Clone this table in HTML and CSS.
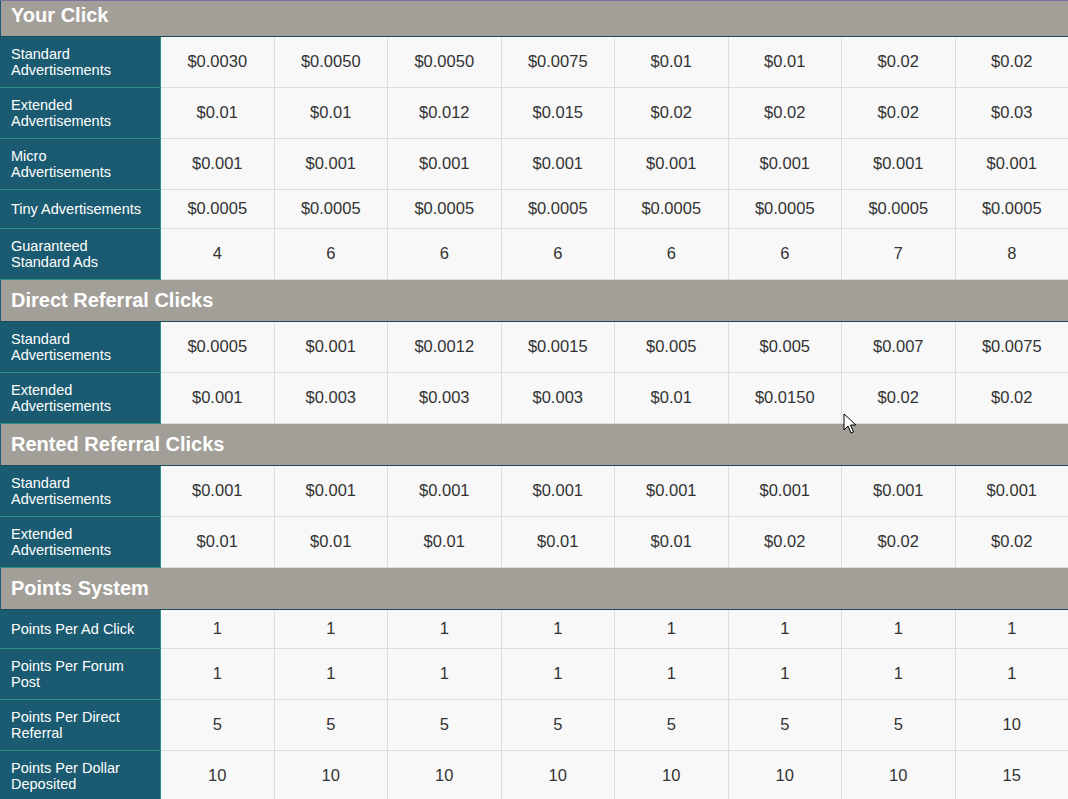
FILE: index.html
```html
<!DOCTYPE html>
<html lang="en">
<head>
  <meta charset="UTF-8">
  <meta name="viewport" content="width=device-width, initial-scale=1.0">
  <title>Membership Earnings</title>
  <link rel="stylesheet" href="styles.css">
</head>
<body>

<div id="earnings">
  <table class="rates">
    <colgroup>
      <col class="label-col">
      <col span="8">
    </colgroup>
    <tbody>
      <tr class="section first"><th colspan="9">Your Click</th></tr>
      <tr class="two">
        <td class="label">Standard Advertisements</td>
        <td>$0.0030</td><td>$0.0050</td><td>$0.0050</td><td>$0.0075</td><td>$0.01</td><td>$0.01</td><td>$0.02</td><td>$0.02</td>
      </tr>
      <tr class="two">
        <td class="label">Extended Advertisements</td>
        <td>$0.01</td><td>$0.01</td><td>$0.012</td><td>$0.015</td><td>$0.02</td><td>$0.02</td><td>$0.02</td><td>$0.03</td>
      </tr>
      <tr class="two">
        <td class="label">Micro<br>Advertisements</td>
        <td>$0.001</td><td>$0.001</td><td>$0.001</td><td>$0.001</td><td>$0.001</td><td>$0.001</td><td>$0.001</td><td>$0.001</td>
      </tr>
      <tr class="one">
        <td class="label">Tiny Advertisements</td>
        <td>$0.0005</td><td>$0.0005</td><td>$0.0005</td><td>$0.0005</td><td>$0.0005</td><td>$0.0005</td><td>$0.0005</td><td>$0.0005</td>
      </tr>
      <tr class="two">
        <td class="label">Guaranteed<br>Standard Ads</td>
        <td>4</td><td>6</td><td>6</td><td>6</td><td>6</td><td>6</td><td>7</td><td>8</td>
      </tr>

      <tr class="section"><th colspan="9">Direct Referral Clicks</th></tr>
      <tr class="two">
        <td class="label">Standard Advertisements</td>
        <td>$0.0005</td><td>$0.001</td><td>$0.0012</td><td>$0.0015</td><td>$0.005</td><td>$0.005</td><td>$0.007</td><td>$0.0075</td>
      </tr>
      <tr class="two">
        <td class="label">Extended Advertisements</td>
        <td>$0.001</td><td>$0.003</td><td>$0.003</td><td>$0.003</td><td>$0.01</td><td>$0.0150</td><td>$0.02</td><td>$0.02</td>
      </tr>

      <tr class="section"><th colspan="9">Rented Referral Clicks</th></tr>
      <tr class="two">
        <td class="label">Standard Advertisements</td>
        <td>$0.001</td><td>$0.001</td><td>$0.001</td><td>$0.001</td><td>$0.001</td><td>$0.001</td><td>$0.001</td><td>$0.001</td>
      </tr>
      <tr class="two">
        <td class="label">Extended Advertisements</td>
        <td>$0.01</td><td>$0.01</td><td>$0.01</td><td>$0.01</td><td>$0.01</td><td>$0.02</td><td>$0.02</td><td>$0.02</td>
      </tr>

      <tr class="section"><th colspan="9">Points System</th></tr>
      <tr class="one">
        <td class="label">Points Per Ad Click</td>
        <td>1</td><td>1</td><td>1</td><td>1</td><td>1</td><td>1</td><td>1</td><td>1</td>
      </tr>
      <tr class="two">
        <td class="label">Points Per Forum Post</td>
        <td>1</td><td>1</td><td>1</td><td>1</td><td>1</td><td>1</td><td>1</td><td>1</td>
      </tr>
      <tr class="two">
        <td class="label">Points Per Direct Referral</td>
        <td>5</td><td>5</td><td>5</td><td>5</td><td>5</td><td>5</td><td>5</td><td>10</td>
      </tr>
      <tr class="two">
        <td class="label">Points Per Dollar Deposited</td>
        <td>10</td><td>10</td><td>10</td><td>10</td><td>10</td><td>10</td><td>10</td><td>15</td>
      </tr>
    </tbody>
  </table>

  <!-- mouse pointer caught in the shot -->
  <svg class="pointer" width="14" height="22" viewBox="0 0 14 22">
    <path d="M1 1 L1 17 L5 13 L8 20 L10.5 19 L7.5 12 L13 12 Z" fill="#fff" stroke="#000" stroke-width="1" stroke-linejoin="round"/>
  </svg>
</div>

</body>
</html>
```

FILE: styles.css
```css
* {
  box-sizing: border-box;
}

body {
  margin: 0;
  background-color: #fff;
  font-family: "Liberation Sans", Arial, sans-serif;
  color: #333;
}

#earnings {
  position: relative;
  width: 1068px;
  border-top: 1px solid #7d6c9c;
  overflow: hidden;
}

.rates {
  width: 1069px;
  border-collapse: collapse;
  table-layout: fixed;
  border-left: 1px solid #1b5b71;
}

.label-col {
  width: 160px;
}

.section th {
  height: 42px;
  padding: 0 10px;
  background-color: #a29f99;
  color: #fff;
  font-size: 20px;
  font-weight: bold;
  text-align: left;
  border-bottom: 1px solid #1c4b5c;
}

.section.first th {
  height: 35px;
  padding-bottom: 6px;
}

.rates td {
  padding: 0 4px;
  background-color: #f8f8f8;
  border: 1px solid #dddddd;
  text-align: center;
  vertical-align: middle;
  font-size: 16.5px;
  color: #333;
}

.rates td.label {
  padding: 0 6px 0 10px;
  background-color: #1b5b71;
  border: 1px solid #2a8f87;
  border-left: none;
  color: #fff;
  text-align: left;
  font-size: 14.5px;
  line-height: 16px;
}

.two td {
  height: 51px;
}

.one td {
  height: 39px;
}

.pointer {
  position: absolute;
  left: 843px;
  top: 412px;
}
```
